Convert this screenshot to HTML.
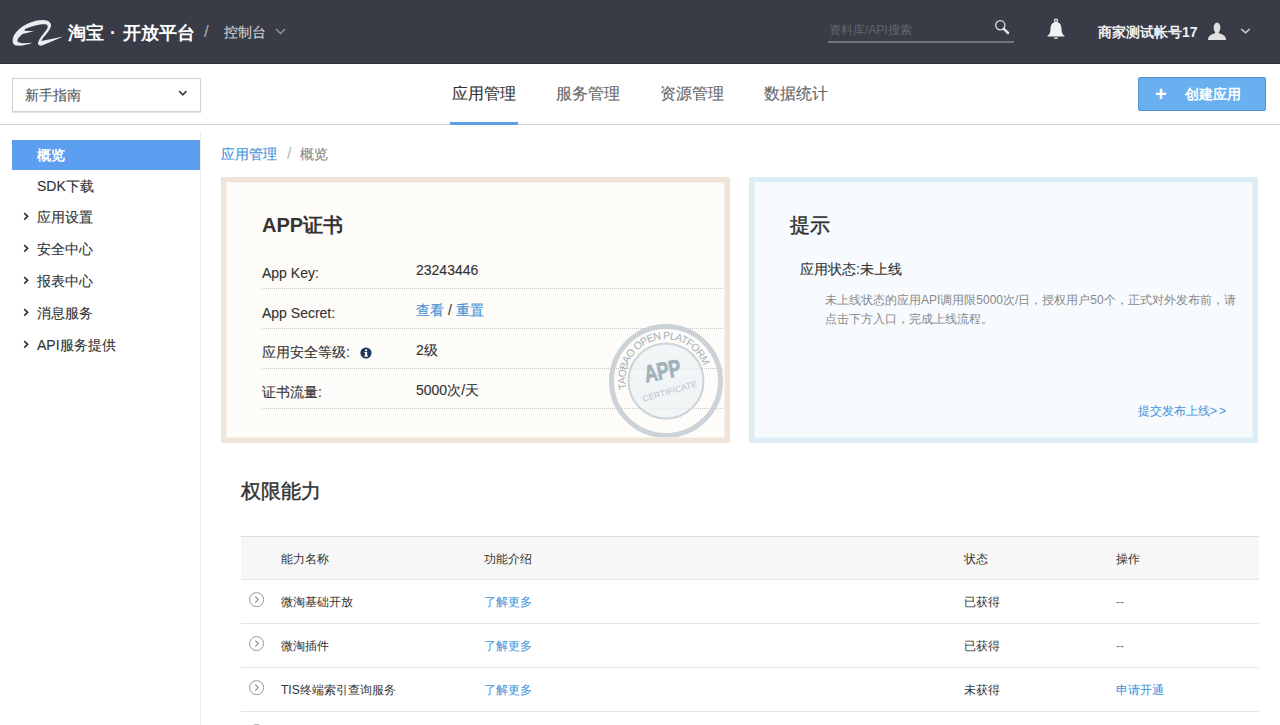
<!DOCTYPE html>
<html><head><meta charset="utf-8">
<style>
*{box-sizing:border-box;margin:0;padding:0}
html,body{width:1280px;height:725px;overflow:hidden;background:#fff;font-family:"Liberation Sans",sans-serif;color:#333;-webkit-text-stroke-width:0.12px}
.h2{-webkit-text-stroke-width:0.45px}
.th,.td,.sm,.nav.on,[style*="font-weight:bold"]{-webkit-text-stroke-width:0}
.abs{position:absolute;white-space:nowrap}
#hdr{position:absolute;left:0;top:0;width:1280px;height:64px;background:#393c46;border-bottom:1px solid #2a2d34}
#bar{position:absolute;left:0;top:64px;width:1280px;height:61px;background:#fff;border-bottom:1px solid #d2d2d2}
#side{position:absolute;left:0;top:131px;width:201px;height:594px;border-right:1px solid #ebebeb}
.nav{position:absolute;left:12px;width:188px;height:30px;font-size:14px;line-height:30px;padding-left:25px;color:#333}
.nav.on{background:#5c9eef;color:#fff;font-weight:bold}
.nav svg{position:absolute;left:11px;top:10px}
.tab{position:absolute;top:19px;font-size:16px;line-height:22px;color:#666}
.card{position:absolute;top:177px;height:266px;width:509px;border:6px solid}
.card:after{content:"";position:absolute;left:-1px;top:-1px;right:-1px;bottom:-1px;border:1px solid rgba(255,255,255,.5);pointer-events:none}
.lbl{position:absolute;left:35px;font-size:14px;line-height:18px;color:#333}
.val{position:absolute;left:189px;font-size:14px;line-height:18px;color:#333}
.dot{position:absolute;left:35px;width:461px;border-top:1px dotted #c8c8c8}
.th{position:absolute;top:551px;font-size:12px;line-height:16px;color:#333}
.td{position:absolute;font-size:12px;line-height:16px;color:#333}
.rowline{position:absolute;left:241px;width:1018px;height:1px;background:#e5e5e5}
.blue,.td.blue{color:#4192da}
</style></head><body>
<div id="hdr">
  <svg class="abs" style="left:8px;top:15px" width="60" height="37" viewBox="0 0 60 37">
    <path d="M4.7 25.5 C4.5 19 12 12 20 8.5 C26 6 32 4.8 37 5.2 C41 5.5 43.5 8 43 11 C42.5 14 39 18.5 35 23 L33.2 26 L55.5 21.6 L34 30.6 C31.5 31 29.8 30 30 28 C30.5 25 34 20.5 38 15.5 C40.5 12 40.5 9.5 37 9.2 C32 9 24 11 17 14 L16.5 15.8 L26 16.2 L14.4 19.1 C12 21.5 9.5 23.5 9.4 25.5 C9.3 27.5 12 28.2 16 28.2 L24.3 27.8 C20 29.8 14 31 9 30.6 C5.5 30.3 4.5 28 4.7 25.5 Z" fill="#ebecef"/>
  </svg>
  <div class="abs" style="left:68px;top:21px;font-size:18px;line-height:24px;color:#fff;font-weight:bold">淘宝<span style="margin:0 7px 0 6px">·</span>开放平台</div>
  <div class="abs" style="left:204px;top:22px;font-size:17px;line-height:20px;color:#aaa">/</div>
  <div class="abs" style="left:224px;top:23px;font-size:14px;line-height:18px;color:#cfd0d3">控制台</div>
  <svg class="abs" style="left:275px;top:28px" width="11" height="7" viewBox="0 0 11 7"><path d="M1 1 L5.5 5.5 L10 1" stroke="#999" stroke-width="1.3" fill="none"/></svg>
  <div class="abs sm" style="left:829px;top:22px;font-size:12px;line-height:16px;color:#62656e">资料库/API搜索</div>
  <div class="abs" style="left:828px;top:41px;width:186px;height:2px;background:#72757d"></div>
  <svg class="abs" style="left:994px;top:19px" width="16" height="16" viewBox="0 0 16 16"><circle cx="6.3" cy="6.3" r="4.6" stroke="#ddd" stroke-width="1.3" fill="none"/><path d="M9.6 9.6 L14 14" stroke="#ddd" stroke-width="2.6" stroke-linecap="round"/></svg>
  <svg class="abs" style="left:1046px;top:18px" width="20" height="23" viewBox="0 0 20 23"><circle cx="10" cy="2.6" r="1.5" stroke="#f2f2f2" stroke-width="1.1" fill="none"/><path d="M10 4 C14 4 15.3 7 15.5 11 C15.7 15 16.5 16.5 19 18.6 L1 18.6 C3.5 16.5 4.3 15 4.5 11 C4.7 7 6 4 10 4 Z" fill="#f2f2f2"/><path d="M7.6 19.4 Q10 22.6 12.4 19.4 Z" fill="#f2f2f2"/></svg>
  <div class="abs" style="left:1098px;top:23px;font-size:14px;line-height:18px;color:#f0f0f0;font-weight:bold">商家测试帐号17</div>
  <svg class="abs" style="left:1207px;top:21px" width="20" height="20" viewBox="0 0 20 20"><ellipse cx="10" cy="6.6" rx="3.4" ry="5.2" fill="#e0e0e3"/><path d="M1 19 C1 15.5 3.5 13.5 8 12.3 L8.5 10 L11.5 10 L12 12.3 C16.5 13.5 19 15.5 19 19 Z" fill="#e0e0e3"/></svg>
  <svg class="abs" style="left:1240px;top:28px" width="11" height="7" viewBox="0 0 11 7"><path d="M1.2 1 L5.5 4.8 L9.8 1" stroke="#d0d0d0" stroke-width="1.5" fill="none"/></svg>
</div>

<div id="bar">
  <div class="abs" style="left:12px;top:14px;width:189px;height:34px;border:1px solid #d2d2d2;box-shadow:0 1px 1px rgba(0,0,0,.1)"></div>
  <div class="abs" style="left:25px;top:22px;font-size:14px;line-height:18px;color:#555">新手指南</div>
  <svg class="abs" style="left:178px;top:26px" width="10" height="7" viewBox="0 0 10 7"><path d="M1.2 1.2 L4.8 4.8 L8.4 1.2" stroke="#444" stroke-width="1.8" fill="none"/></svg>
  <div class="tab" style="left:452px;color:#333">应用管理</div>
  <div class="abs" style="left:450px;top:58px;width:68px;height:3px;background:#5c9ee6"></div>
  <div class="tab" style="left:556px">服务管理</div>
  <div class="tab" style="left:660px">资源管理</div>
  <div class="tab" style="left:764px">数据统计</div>
  <div class="abs" style="left:1138px;top:13px;width:128px;height:34px;background:#69b0f0;border:1px solid #5192d2;border-radius:2px"></div>
  <div class="abs" style="left:1155px;top:20px;font-size:20px;line-height:20px;color:#fff;font-weight:bold">+</div>
  <div class="abs" style="left:1185px;top:21px;font-size:14px;line-height:18px;color:#fff;font-weight:bold">创建应用</div>
</div>

<div id="side">
  <div class="nav on" style="top:9px">概览</div>
  <div class="nav" style="top:40px">SDK下载</div>
  <div class="nav" style="top:71px"><svg width="6" height="9" viewBox="0 0 6 9"><path d="M1.2 1 L4.6 4.3 L1.2 7.6" stroke="#333" stroke-width="1.7" fill="none"/></svg>应用设置</div>
  <div class="nav" style="top:103px"><svg width="6" height="9" viewBox="0 0 6 9"><path d="M1.2 1 L4.6 4.3 L1.2 7.6" stroke="#333" stroke-width="1.7" fill="none"/></svg>安全中心</div>
  <div class="nav" style="top:135px"><svg width="6" height="9" viewBox="0 0 6 9"><path d="M1.2 1 L4.6 4.3 L1.2 7.6" stroke="#333" stroke-width="1.7" fill="none"/></svg>报表中心</div>
  <div class="nav" style="top:167px"><svg width="6" height="9" viewBox="0 0 6 9"><path d="M1.2 1 L4.6 4.3 L1.2 7.6" stroke="#333" stroke-width="1.7" fill="none"/></svg>消息服务</div>
  <div class="nav" style="top:199px"><svg width="6" height="9" viewBox="0 0 6 9"><path d="M1.2 1 L4.6 4.3 L1.2 7.6" stroke="#333" stroke-width="1.7" fill="none"/></svg>API服务提供</div>
</div>

<div class="abs" style="left:221px;top:145px;font-size:14px;line-height:18px;color:#888"><span class="blue">应用管理</span><span style="margin:0 9px 0 10px;color:#bbb;font-size:16px">/</span>概览</div>

<!-- cert card -->
<div class="card" style="left:221px;border-color:#f0e3d8;background:#fefcf8">
  <div class="abs" style="left:35px;top:30px;font-size:20px;line-height:24px;font-weight:bold;color:#333">APP证书</div>
  <div class="lbl" style="top:81px">App Key:</div>
  <div class="val" style="top:78px">23243446</div>
  <div class="dot" style="top:105px"></div>
  <div class="lbl" style="top:121px">App Secret:</div>
  <div class="val" style="top:118px"><span class="blue">查看</span> / <span class="blue">重置</span></div>
  <div class="dot" style="top:145px"></div>
  <div class="lbl" style="top:160px">应用安全等级:</div>
  <svg class="abs" style="left:133px;top:164px" width="12" height="12" viewBox="0 0 12 12"><circle cx="6" cy="6" r="5.6" fill="#20395f"/><rect x="5" y="5" width="2.2" height="4.2" fill="#fff"/><rect x="4.2" y="8.6" width="3.8" height="1" fill="#fff"/><rect x="4.3" y="5" width="1.5" height="0.9" fill="#fff"/><circle cx="6.1" cy="3.3" r="1.1" fill="#fff"/></svg>
  <div class="val" style="top:158px">2级</div>
  <div class="dot" style="top:185px"></div>
  <div class="lbl" style="top:200px">证书流量:</div>
  <div class="val" style="top:198px">5000次/天</div>
  <div class="dot" style="top:225px"></div>
  <!-- stamp -->
  <svg class="abs" style="left:379px;top:138px" width="120" height="120" viewBox="0 0 120 120">
    <defs><path id="arc" d="M 20.6 67.9 A 40 40 0 0 1 97.6 46.3"/></defs>
    <circle cx="60" cy="60" r="54.5" stroke="#c6ced4" stroke-width="5" fill="none" opacity="0.9"/>
    <circle cx="60" cy="60" r="37.5" stroke="#cad4da" stroke-width="2" fill="#eef3f6" fill-opacity="0.75"/>
    <text font-family="Liberation Sans" font-size="10.5" fill="#a4b0b8"><textPath href="#arc" textLength="122" lengthAdjust="spacing">TAOBAO OPEN PLATFORM</textPath></text>
    <text x="0" y="0" font-family="Liberation Sans" font-weight="bold" font-size="23" fill="#a2b2bc" stroke="#a2b2bc" stroke-width="0.7" transform="translate(58 58) rotate(-11) scale(0.78 1.05)" text-anchor="middle">APP</text>
    <text x="0" y="0" font-family="Liberation Sans" font-size="8.4" fill="#b6c1c8" transform="translate(64.5 73) rotate(-16)" text-anchor="middle" letter-spacing="0.2">CERTIFICATE</text>
  </svg>
</div>

<!-- tip card -->
<div class="card" style="left:749px;border-color:#dcedf6;background:#f7fbfd">
  <div class="abs h2" style="left:35px;top:30px;font-size:20px;line-height:24px;color:#333">提示</div>
  <div class="abs" style="left:45px;top:77px;font-size:14px;line-height:18px;color:#333">应用状态:未上线</div>
  <div class="abs sm" style="left:70px;top:108px;width:420px;white-space:normal;font-size:12px;line-height:19px;color:#888">未上线状态的应用API调用限5000次/日，授权用户50个，正式对外发布前，请点击下方入口，完成上线流程。</div>
  <div class="abs blue sm" style="left:383px;top:220px;font-size:12px;line-height:16px">提交发布上线<span style="letter-spacing:2px">&gt;&gt;</span></div>
</div>

<div class="abs h2" style="left:241px;top:479px;font-size:20px;line-height:24px;color:#333">权限能力</div>

<div class="abs" style="left:241px;top:536px;width:1018px;height:43px;background:#f7f7f7;border-top:1px solid #dcdcdc"></div>
<div class="th" style="left:281px">能力名称</div>
<div class="th" style="left:484px">功能介绍</div>
<div class="th" style="left:964px">状态</div>
<div class="th" style="left:1116px">操作</div>
<div class="rowline" style="top:579px"></div>
<div class="rowline" style="top:623px"></div>
<div class="rowline" style="top:667px"></div>
<div class="rowline" style="top:711px"></div>
<svg class="abs" style="left:249px;top:592px" width="16" height="16" viewBox="0 0 16 16"><circle cx="7.6" cy="7.6" r="7" stroke="#999" stroke-width="1" fill="none"/><path d="M6.3 4.6 L9.2 7.6 L6.3 10.6" stroke="#888" stroke-width="1.1" fill="none"/></svg>
<div class="td" style="left:281px;top:594px">微淘基础开放</div>
<div class="td blue" style="left:484px;top:594px">了解更多</div>
<div class="td" style="left:964px;top:594px">已获得</div>
<div class="td" style="left:1116px;top:594px"><span style="color:#777">--</span></div>
<svg class="abs" style="left:249px;top:636px" width="16" height="16" viewBox="0 0 16 16"><circle cx="7.6" cy="7.6" r="7" stroke="#999" stroke-width="1" fill="none"/><path d="M6.3 4.6 L9.2 7.6 L6.3 10.6" stroke="#888" stroke-width="1.1" fill="none"/></svg>
<div class="td" style="left:281px;top:638px">微淘插件</div>
<div class="td blue" style="left:484px;top:638px">了解更多</div>
<div class="td" style="left:964px;top:638px">已获得</div>
<div class="td" style="left:1116px;top:638px"><span style="color:#777">--</span></div>
<svg class="abs" style="left:249px;top:680px" width="16" height="16" viewBox="0 0 16 16"><circle cx="7.6" cy="7.6" r="7" stroke="#999" stroke-width="1" fill="none"/><path d="M6.3 4.6 L9.2 7.6 L6.3 10.6" stroke="#888" stroke-width="1.1" fill="none"/></svg>
<div class="td" style="left:281px;top:682px">TIS终端索引查询服务</div>
<div class="td blue" style="left:484px;top:682px">了解更多</div>
<div class="td" style="left:964px;top:682px">未获得</div>
<div class="td blue" style="left:1116px;top:682px">申请开通</div>
<svg class="abs" style="left:249px;top:724px" width="16" height="16" viewBox="0 0 16 16"><circle cx="7.6" cy="7.6" r="7" stroke="#999" stroke-width="1" fill="none"/><path d="M6.3 4.6 L9.2 7.6 L6.3 10.6" stroke="#888" stroke-width="1.1" fill="none"/></svg>
</body></html>
